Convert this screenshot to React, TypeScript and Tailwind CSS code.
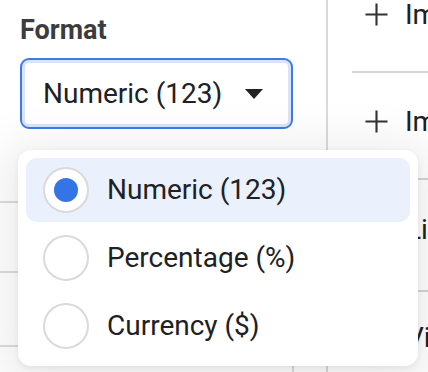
import { useState } from 'react';

const options = ['Numeric (123)', 'Percentage (%)', 'Currency ($)'];

function PlusIcon() {
  return (
    <svg aria-hidden="true" viewBox="0 0 24 24" className="w-[23px] h-[23px] shrink-0" stroke="#333" strokeWidth="2.2" strokeLinecap="butt">
      <path d="M12 0.5v23M0.5 12h23" />
    </svg>
  );
}

export default function App() {
  const [selected, setSelected] = useState(0);

  return (
    <div className="relative w-[428px] h-[372px] overflow-hidden bg-white font-['Roboto',sans-serif] text-[#202124]">
      <div className="flex h-full">
        {/* Pannello formato */}
        <div className="w-[328px] shrink-0 border-r-2 border-[#dadada]">
          <div className="pl-5 pt-[14px]">
            <p className="text-[27px] leading-[32px] font-bold text-[#3c3c3c]">Format</p>
            <button className="mt-3 w-[273px] h-[71px] flex items-center justify-between pl-[21px] pr-[28px] rounded-[9px] border-2 border-[#3f7ae6] shadow-[inset_0_0_0_3px_#d7e4fb] bg-white">
              <span className="text-[28px] leading-none">{options[selected]}</span>
              <svg aria-hidden="true" viewBox="0 0 18 10" className="w-[18px] h-[10px]">
                <path d="M0 0h18L9 10z" fill="#222" />
              </svg>
            </button>
          </div>
          <div className="h-[74px] border-b-2 border-[#dcdcdc]" />
          <div className="h-[70px] border-b-2 border-[#dcdcdc]" />
          <div className="h-[74px] border-b-2 border-[#dcdcdc]" />
          <div className="h-[30px] w-[294px] border-r-2 border-[#dcdcdc]" />
        </div>

        {/* Colonna azioni */}
        <div className="flex-1 min-w-0 overflow-hidden">
          <div className="ml-6 h-[73px] border-b-2 border-[#d4d4d4] pt-[3px] flex items-start gap-[17px] pl-[13px]">
            <PlusIcon />
            <span className="text-[28px] leading-[28px] whitespace-nowrap -mt-[2px]">Import data</span>
          </div>
          <div className="h-[105px] pt-[37px] flex items-start gap-[17px] pl-[37px]">
            <PlusIcon />
            <span className="text-[28px] leading-[28px] whitespace-nowrap -mt-[2px]">Import rows</span>
          </div>
          <div className="h-[112px] border-t-2 border-[#d4d4d4] pt-[36px] pl-[78px]">
            <span className="text-[28px] leading-[28px] whitespace-nowrap">Link</span>
          </div>
          <div className="h-[90px] border-t-2 border-[#d4d4d4] pt-[32px] pl-[78px]">
            <span className="text-[28px] leading-[28px] whitespace-nowrap">View</span>
          </div>
        </div>
      </div>

      {/* Menu a tendina */}
      <div className="absolute left-[18px] top-[150px] w-[400px] h-[216px] rounded-[13px] bg-white p-2 flex flex-col gap-1 shadow-[0_8px_48px_16px_rgba(0,0,0,0.075),0_2px_6px_rgba(0,0,0,0.07)]">
        {options.map((opt, i) => (
          <button
            key={opt}
            onClick={() => setSelected(i)}
            className={`h-16 flex items-center gap-[18px] pl-[17px] rounded-[11px] text-left ${
              i === selected ? 'bg-[#eaf0fc]' : 'bg-white'
            }`}
          >
            <span className="w-[46px] h-[46px] rounded-full border-2 border-[#dadada] bg-white flex items-center justify-center shrink-0">
              {i === selected && <span className="w-6 h-6 rounded-full bg-[#3474e6]" />}
            </span>
            <span className="text-[28px] leading-none">{opt}</span>
          </button>
        ))}
      </div>
    </div>
  );
}
